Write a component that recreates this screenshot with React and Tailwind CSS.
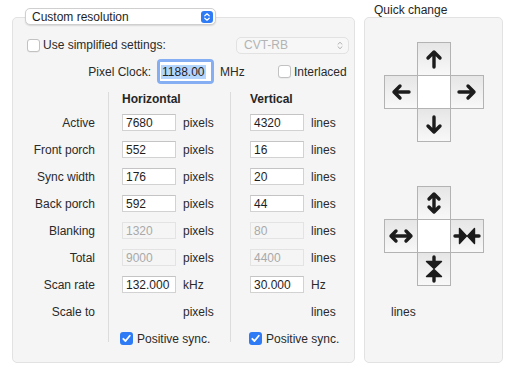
import React from "react";

const font = { fontFamily: '"Liberation Sans", Arial, sans-serif' };

function Check({ checked }) {
  if (checked) {
    return (
      <span className="flex h-[13px] w-[13px] shrink-0 items-center justify-center rounded-[3px] bg-[#2f7bf5]">
        <svg width="11" height="11" viewBox="0 0 11 11">
          <path d="M2.3 5.8 L4.5 8 L8.8 2.8" fill="none" stroke="#fff" strokeWidth="1.8" strokeLinecap="round" strokeLinejoin="round" />
        </svg>
      </span>
    );
  }
  return <span className="h-[13px] w-[13px] shrink-0 rounded-[3px] border border-[#c2c2c2] bg-white shadow-[0_0.5px_0.5px_rgba(0,0,0,0.08)]" />;
}

function Field({ value, disabled }) {
  return (
    <div
      className={
        disabled
          ? "flex h-[17px] w-[54px] items-center border border-[#e3e3e3] bg-[#f5f5f5] pl-[3px] text-[#a9a9a9]"
          : "flex h-[17px] w-[54px] items-center border border-[#d2d2d2] border-t-[#c4c4c4] bg-white pl-[3px] text-[#1e1e1e]"
      }
    >
      {value}
    </div>
  );
}

function Arrow({ d, heads }) {
  return (
    <svg width="32" height="32" viewBox="0 0 32 32">
      <path d={d} fill="none" stroke="#1c1c1c" strokeWidth="3.4" strokeLinecap="round" strokeLinejoin="round" />
      {heads && <path d={heads} fill="#1c1c1c" stroke="#1c1c1c" strokeWidth="1.4" strokeLinejoin="round" />}
    </svg>
  );
}

function Pad({ top, left, right, bottom }) {
  const cell = "flex h-[34px] w-[34px] items-center justify-center border border-[#b3b3b3] bg-gradient-to-b from-[#e6e6e6] to-[#f8f8f8]";
  return (
    <div className="grid grid-cols-[33px_33px_33px] grid-rows-[33px_33px_33px]">
      <div />
      <div className={cell}>{top}</div>
      <div />
      <div className={cell}>{left}</div>
      <div className="h-[34px] w-[34px] border border-[#b3b3b3] bg-white" />
      <div className={cell}>{right}</div>
      <div />
      <div className={cell}>{bottom}</div>
      <div />
    </div>
  );
}

const labels = ["Active", "Front porch", "Sync width", "Back porch", "Blanking", "Total", "Scan rate", "Scale to"];

const horiz = [
  ["7680", false, "pixels"],
  ["552", false, "pixels"],
  ["176", false, "pixels"],
  ["592", false, "pixels"],
  ["1320", true, "pixels"],
  ["9000", true, "pixels"],
  ["132.000", false, "kHz"],
  [null, false, "pixels"],
];

const vert = [
  ["4320", false, "lines"],
  ["16", false, "lines"],
  ["20", false, "lines"],
  ["44", false, "lines"],
  ["80", true, "lines"],
  ["4400", true, "lines"],
  ["30.000", false, "Hz"],
  [null, false, "lines"],
];

function Column({ title, rows, pl, cbPl }) {
  return (
    <div className="w-[121px] shrink-0">
      <div className={`h-[17px] font-bold leading-[14px] text-[#262626] ${pl}`}>{title}</div>
      {rows.map(([v, dis, unit], i) => (
        <div key={i} className={`flex h-[27px] items-center gap-[7px] ${pl}`}>
          {v === null ? <div className="w-[54px]" /> : <Field value={v} disabled={dis} />}
          <span>{unit}</span>
        </div>
      ))}
      <div className={`flex h-[27px] items-center gap-[4px] ${cbPl}`}>
        <Check checked />
        <span>Positive sync.</span>
      </div>
    </div>
  );
}

export default function App() {
  return (
    <div className="h-[371px] w-[509px] overflow-hidden bg-white text-[12px] leading-[14px] text-[#2a2a2a]" style={font}>
      <div className="flex gap-[9px] pl-[12px]">
        {/* Left panel */}
        <div className="flex w-[343px] shrink-0 flex-col">
          <div className="relative z-10 ml-[13px] mt-[8px] flex h-[17px] w-[191px] items-center justify-between rounded-[5px] border border-[#cfcfcf] bg-white pl-[6px] pr-[2px] shadow-[0_1px_1.5px_rgba(0,0,0,0.12)]">
            <span className="text-[#1e1e1e]">Custom resolution</span>
            <span className="flex h-[12px] w-[12px] items-center justify-center rounded-[3px] bg-[#2f7bf5]">
              <svg width="8" height="10" viewBox="0 0 8 10">
                <path d="M1.8 3.8 L4 1.8 L6.2 3.8 M1.8 6.2 L4 8.2 L6.2 6.2" fill="none" stroke="#fff" strokeWidth="1.2" strokeLinecap="round" strokeLinejoin="round" />
              </svg>
            </span>
          </div>
          <div className="-mt-[8px] h-[346px] rounded-[5px] border border-[#e2e2e2] bg-[#f5f5f5] pt-[17px]">
            <div className="flex h-[20px] items-center pl-[14px]">
              <Check />
              <span className="ml-[3px]">Use simplified settings:</span>
              <div className="ml-auto mr-[5px] flex h-[17px] w-[113px] items-center justify-between rounded-[5px] border border-[#e2e2e2] bg-[#f7f7f7] pl-[7px] pr-[5px] text-[#b3b3b3]">
                <span>CVT-RB</span>
                <svg width="6" height="9" viewBox="0 0 6 9">
                  <path d="M1 3.2 L3 1.3 L5 3.2 M1 5.8 L3 7.7 L5 5.8" fill="none" stroke="#b0b0b0" strokeWidth="1" strokeLinecap="round" strokeLinejoin="round" />
                </svg>
              </div>
            </div>
            <div className="mt-[4px] flex h-[25px] items-center">
              <span className="w-[138px] text-right">Pixel Clock:</span>
              <div className="ml-[6px] flex h-[25px] w-[57px] items-center justify-center rounded-[4px] bg-[#86aef2] p-[3px]">
                <div className="flex h-full w-full items-center bg-white pl-[1px]">
                  <span className="bg-[#b4d5fe] px-[1px] text-[#1e1e1e]">1188.00</span>
                </div>
              </div>
              <span className="ml-[6px] w-[58px]">MHz</span>
              <Check />
              <span className="ml-[3px]">Interlaced</span>
            </div>
            <div className="mt-[8px] flex">
              <div className="w-[95px] shrink-0 pr-[13px] text-right">
                <div className="h-[17px]" />
                {labels.map((l) => (
                  <div key={l} className="flex h-[27px] items-center justify-end">{l}</div>
                ))}
              </div>
              <div className="h-[250px] w-px shrink-0 bg-[#dcdcdc]" />
              <Column title="Horizontal" rows={horiz} pl="pl-[13px]" cbPl="pl-[11px]" />
              <div className="h-[250px] w-px shrink-0 bg-[#dcdcdc]" />
              <Column title="Vertical" rows={vert} pl="pl-[19px]" cbPl="pl-[18px]" />
            </div>
          </div>
        </div>

        {/* Right panel */}
        <div className="flex w-[139px] shrink-0 flex-col">
          <div className="h-[17px] pl-[10px] pt-[3px] text-[#262626]">Quick change</div>
          <div className="flex h-[346px] flex-col rounded-[5px] border border-[#e2e2e2] bg-[#f5f5f5] pt-[24px]">
            <div className="flex justify-center pr-[1px]">
              <Pad
                top={<Arrow d="M16 24 V9 M10 15 L16 9 L22 15" />}
                left={<Arrow d="M24 16 H9 M15 10 L9 16 L15 22" />}
                right={<Arrow d="M8 16 H23 M17 10 L23 16 L17 22" />}
                bottom={<Arrow d="M16 8 V23 M10 17 L16 23 L22 17" />}
              />
            </div>
            <div className="mt-[45px] flex justify-center pr-[1px]">
              <Pad
                top={<Arrow d="M16 7 V25 M11 12 L16 7 L21 12 M11 20 L16 25 L21 20" />}
                left={<Arrow d="M6 16 H26 M11 11 L6 16 L11 21 M21 11 L26 16 L21 21" />}
                right={<Arrow d="M4 16 H10 M22 16 H28" heads="M8.5 8.5 L15.5 16 L8.5 23.5 Z M23.5 8.5 L16.5 16 L23.5 23.5 Z" />}
                bottom={<Arrow d="M16 4 V10 M16 22 V28" heads="M8.5 8.5 L16 15.5 L23.5 8.5 Z M8.5 23.5 L16 16.5 L23.5 23.5 Z" />}
              />
            </div>
            <div className="mt-[20px] pl-[26px]">lines</div>
          </div>
        </div>
      </div>
    </div>
  );
}
